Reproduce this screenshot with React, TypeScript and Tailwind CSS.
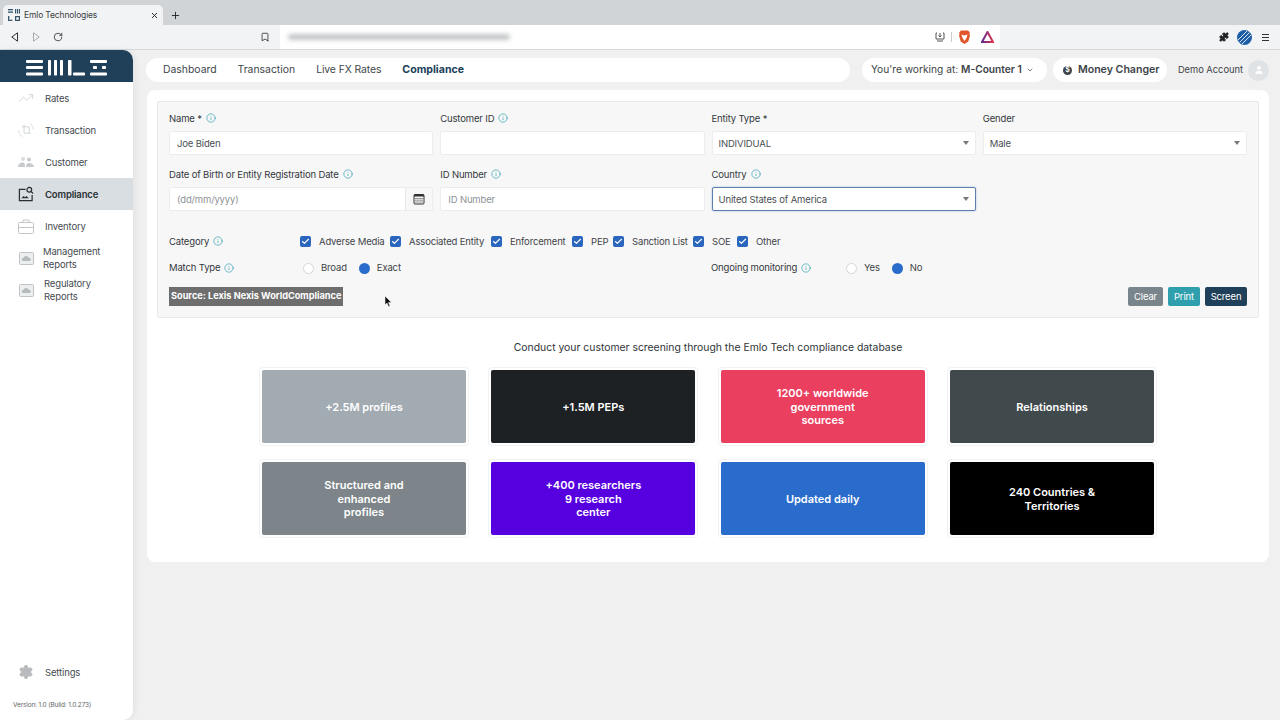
import React from 'react'
import { ChevronDown, Puzzle, RotateCw, Settings, TrendingUp, X, Plus, Bookmark, User, Info, Check } from 'lucide-react'

const tiles = [
  { text: ['+2.5M profiles'], bg: 'bg-[#a2abb1]' },
  { text: ['+1.5M PEPs'], bg: 'bg-[#1e2124]' },
  { text: ['1200+ worldwide', 'government', 'sources'], bg: 'bg-[#ea3f5f]' },
  { text: ['Relationships'], bg: 'bg-[#40494b]' },
  { text: ['Structured and', 'enhanced', 'profiles'], bg: 'bg-[#7d858a]' },
  { text: ['+400 researchers', '9 research', 'center'], bg: 'bg-[#5600e0]' },
  { text: ['Updated daily'], bg: 'bg-[#2a6ccb]' },
  { text: ['240 Countries &', 'Territories'], bg: 'bg-black' },
]

const categories = [
  { label: 'Adverse Media', width: 'w-[90px]' },
  { label: 'Associated Entity', width: 'w-[101px]' },
  { label: 'Enforcement', width: 'w-[81px]' },
  { label: 'PEP', width: 'w-[41px]' },
  { label: 'Sanction List', width: 'w-[80px]' },
  { label: 'SOE', width: 'w-[44px]' },
  { label: 'Other', width: 'w-[50px]' },
]

const InfoDot = () => <Info className="w-[10px] h-[10px] text-[#2b9db0] shrink-0" strokeWidth={1.6} />

const Logo = () => (
  <svg width="82" height="16" viewBox="0 0 82 16" fill="#fff" aria-hidden="true">
    <rect x="0" y="0" width="17" height="3" rx="1" />
    <rect x="0" y="6" width="17" height="3" rx="1" />
    <rect x="0" y="12.5" width="17" height="3" rx="1" />
    <rect x="22" y="0" width="3" height="15.5" rx=".8" />
    <rect x="28" y="0" width="3" height="15.5" rx=".8" />
    <rect x="34" y="0" width="3" height="15.5" rx=".8" />
    <rect x="42" y="0" width="3.500" height="15.5" rx=".8" />
    <rect x="47" y="12.5" width="12" height="3" rx=".8" />
    <rect x="64" y="0" width="17" height="3" rx="1" />
    <rect x="67" y="6" width="4" height="3" rx=".8" />
    <rect x="76" y="6" width="4" height="3" rx=".8" />
    <rect x="64" y="12.5" width="17" height="3" rx="1" />
  </svg>
)

const Favicon = () => (
  <svg width="12" height="12" viewBox="0 0 12 12" fill="#33546b" aria-hidden="true">
    <rect x="0" y="0" width="5" height="1.3" />
    <rect x="0" y="2.5" width="5" height="1.3" />
    <rect x="7" y="0" width="1.2" height="4.5" />
    <rect x="9" y="0" width="1.2" height="4.5" />
    <rect x="11" y="0" width="1" height="4.5" />
    <rect x="0" y="7" width="1.3" height="5" />
    <rect x="1.3" y="10.7" width="3" height="1.3" />
    <path d="M7 7h5v5H7zM8.2 8.2v2.6h2.6V8.2z" fillRule="evenodd" />
  </svg>
)

const Brave = () => (
  <svg width="13" height="14" viewBox="0 0 13 14" aria-hidden="true">
    <path d="M3 .5h7l2 2.2-.6 1.3.6 1.5-1.7 6L6.5 14 2.700 11.500 1 5.500 1.600 4 1 2.700z" fill="#e2552b" />
    <path d="M3.500 4.500 6.500 5.500 9.500 4.500 8.500 8 6.500 11 4.500 8z" fill="#fff" />
  </svg>
)

const Warn = () => (
  <svg width="13" height="12" viewBox="0 0 13 12" aria-hidden="true">
    <defs>
      <linearGradient id="warn" x1="0" x2="1" y1="0" y2="0">
        <stop offset="0" stopColor="#5d2a91" />
        <stop offset="1" stopColor="#e0344c" />
      </linearGradient>
    </defs>
    <path d="M6.500 1 12 11H1z" fill="none" stroke="url(#warn)" strokeWidth="2" />
  </svg>
)

const Globe = () => (
  <svg width="15" height="15" viewBox="0 0 15 15" aria-hidden="true">
    <circle cx="7.500" cy="7.500" r="7.500" fill="#1f5fa8" />
    <path d="M1 10 10 1M2.500 12.500 12.500 2.500M5 14 14 5" stroke="#d8e4ee" strokeWidth="1" />
  </svg>
)

const Calendar = () => (
  <svg width="12" height="12" viewBox="0 0 12 12" fill="none" aria-hidden="true">
    <rect x="1" y="1.500" width="10" height="9.500" rx="1" stroke="#333" />
    <rect x="1" y="1.500" width="10" height="2" fill="#333" />
    <path d="M2.500 5.500h7M2.500 7.200h7M2.500 9h7" stroke="#333" strokeDasharray="1 1" />
  </svg>
)

const ReportIcon = () => (
  <svg width="15" height="13" viewBox="0 0 15 13" aria-hidden="true">
    <rect x=".5" y=".5" width="14" height="12" rx="1" fill="#eceeef" stroke="#bfc3c6" />
    <path d="M4 9a1.500 1.500 0 0 1 .4-3 3 3 0 0 1 5.600 0 1.500 1.500 0 0 1 .8 3z" fill="#b5babd" />
  </svg>
)

const TransactionIcon = () => (
  <svg width="20" height="20" viewBox="0 0 20 20" fill="none" stroke="#c8cbce" strokeWidth="1" aria-hidden="true">
    <path d="M5 6h9v8M7.500 3.500V14H16" />
    <path d="M1 11a9 9 0 0 0 5 7.500M19 9a9 9 0 0 0-5-7.500" strokeDasharray="3 1" />
  </svg>
)

const CustomerIcon = () => (
  <svg width="16" height="12" viewBox="0 0 16 12" fill="#c8cbce" aria-hidden="true">
    <circle cx="5" cy="3" r="2" fill="#dadcde" />
    <circle cx="11" cy="3.500" r="2" />
    <path d="M0 11c0-3 2-4.500 4.500-4.500S7 8 7 11zM8 11c0-3 1-4 3-4s5 1 5 4z" />
  </svg>
)

const InventoryIcon = () => (
  <svg width="16" height="15" viewBox="0 0 16 15" fill="none" stroke="#c3c6c9" strokeWidth="1" aria-hidden="true">
    <rect x=".5" y="3.500" width="15" height="11" rx="1" />
    <path d="M.5 8.500h15M5 3.500V1h6v2.500" />
  </svg>
)

const ComplianceIcon = () => (
  <svg width="17" height="16" viewBox="0 0 17 16" fill="none" stroke="#2a2f33" strokeWidth="1.300" aria-hidden="true">
    <path d="M8 3H1.500v12h13.500V9" />
    <circle cx="12" cy="3.500" r="2.500" />
    <path d="M14 5.500 16 7.500" />
    <path d="M3.500 12.500 6 10l1.500 1.500L9 10l2.500 2.500z" fill="#2a2f33" stroke="none" />
  </svg>
)

const SideItem = ({ icon, lines, active, textGap = 'ml-[11px]' }: { icon: React.ReactNode; lines: string[]; active?: boolean; textGap?: string }) => (
  <div className={`flex items-center h-[32px] pl-[18px] ${active ? 'bg-[#d9dee2] font-semibold text-[#2a2f33]' : 'text-[#454b50]'}`}>
    <div className="w-[16px] flex justify-center shrink-0">{icon}</div>
    <div className={`${textGap} leading-[13px]`}>
      {lines.map((l) => (
        <div key={l}>{l}</div>
      ))}
    </div>
  </div>
)

const Field = ({ label, value, placeholder, select, focus, calendar }: { label: string; value?: string; placeholder?: string; select?: boolean; focus?: boolean; calendar?: boolean }) => (
  <div>
    <div className="flex items-center gap-[4px] h-[14px] mb-[6px] text-[#33383c]">
      <span className="pt-[2px]">{label}</span>
      {(!select || label === 'Country') && <InfoDot />}
    </div>
    <div className={`flex items-center h-[24px] bg-white rounded-[2px] border ${focus ? 'border-[#5b7fae] shadow-[0_0_2px_rgba(70,120,190,0.5)]' : 'border-[#ececec]'}`}>
      <span className={`flex-1 pt-[2px] ${select ? 'pl-[6px]' : 'pl-[7px]'} ${value ? 'text-[#4a4f53]' : 'text-[#8d9296]'}`}>{value ?? placeholder}</span>
      {select && <span className="mr-[6px] w-0 h-0 border-x-[3.5px] border-x-transparent border-t-[4px] border-t-[#777]" />}
      {calendar && (
        <span className="w-[27px] h-full bg-[#f7f7f7] border-l border-[#e8e8e8] flex items-center justify-center">
          <Calendar />
        </span>
      )}
    </div>
  </div>
)

const CheckItem = ({ label, width }: { label: string; width: string }) => (
  <div className={`flex items-center gap-[8px] whitespace-nowrap ${width}`}>
    <span className="w-[11px] h-[11px] rounded-[2px] bg-[#2a66bd] flex items-center justify-center shrink-0">
      <Check className="w-[9px] h-[9px] text-white" strokeWidth={3} />
    </span>
    <span className="pt-[2px] text-[#3f4448]">{label}</span>
  </div>
)

const RadioItem = ({ label, on }: { label: string; on?: boolean }) => (
  <div className="flex items-center gap-[7px]">
    <span className={`w-[11px] h-[11px] rounded-full ${on ? 'bg-[#2a6ccb]' : 'bg-white border border-[#d6d6d6]'}`} />
    <span className="text-[#3f4448]">{label}</span>
  </div>
)

export default function App() {
  return (
    <div className="w-[1280px] h-[720px] overflow-hidden relative bg-[#f0f0f0] text-[9.5px] tracking-[-0.15px] flex flex-col" style={{ fontFamily: 'Inter, "Noto Sans", sans-serif' }}>
      {/* browser tabs */}
      <div className="h-[25px] bg-[#d0d4d6] flex items-end pl-[3px] shrink-0">
        <div className="w-[160px] h-[20px] bg-[#f1f3f4] rounded-t-[5px] flex items-center pl-[5px] pr-[4px] text-[#3d4145] text-[8.5px]">
          <Favicon />
          <span className="ml-[4px] flex-1">Emlo Technologies</span>
          <X className="w-[9px] h-[9px] text-[#222]" strokeWidth={2.5} />
        </div>
        <Plus className="w-[11px] h-[11px] ml-[7px] mb-[4px] text-[#222]" strokeWidth={2} />
      </div>
      <div className="h-[25px] bg-[#f1f3f4] border-b border-[#d6d8da] flex items-center shrink-0">
        <svg className="ml-[11px]" width="7" height="10" viewBox="0 0 7 10" fill="none" stroke="#333" aria-hidden="true"><path d="M6.500.8v8.400L.8 5z" /></svg>
        <svg className="ml-[15px]" width="7" height="10" viewBox="0 0 7 10" fill="none" stroke="#aaa" aria-hidden="true"><path d="M.5.800v8.400L6.200 5z" /></svg>
        <RotateCw className="w-[10px] h-[10px] ml-[13px] text-[#333]" strokeWidth={2} />
        <Bookmark className="w-[10px] h-[10px] ml-[197px] text-[#333]" strokeWidth={2} />
        <div className="w-[720px] h-[24px] ml-[10px] bg-white flex items-center pl-[8px] pr-[6px]">
          <div className="w-[222px] h-[6px] bg-[#c4c6c8] blur-[2px] rounded-full" />
          <div className="flex-1" />
          <svg width="10" height="10" viewBox="0 0 10 10" fill="none" stroke="#555" aria-hidden="true"><path d="M2 1H1v6h8V1H8M5 1v4M3.500 3.500 5 5l1.500-1.500M2 9h6" /></svg>
          <div className="w-px h-[10px] bg-[#ccc] mx-[6px]" />
          <Brave />
          <div className="w-[10px]" />
          <Warn />
        </div>
        <div className="flex-1" />
        <Puzzle className="w-[10px] h-[10px] text-[#222] fill-[#222]" />
        <div className="ml-[8px]"><Globe /></div>
        <div className="ml-[10px] mr-[11px] w-[7px] flex flex-col gap-[2px]">
          <div className="h-px bg-[#333]" />
          <div className="h-px bg-[#333]" />
          <div className="h-px bg-[#333]" />
        </div>
      </div>

      <div className="flex-1 flex min-h-0">
        {/* sidebar */}
        <aside className="w-[133px] shrink-0 bg-white rounded-tr-[10px] rounded-br-[10px] shadow-[2px_0_6px_rgba(0,0,0,0.06)] flex flex-col">
          <div className="h-[32px] bg-[#20405a] rounded-tr-[10px] flex items-center pl-[26px] pt-[3px] shrink-0">
            <Logo />
          </div>
          <div>
            <SideItem icon={<TrendingUp className="w-[16px] h-[16px] text-[#c3c6c9]" strokeWidth={1} />} lines={['Rates']} />
            <SideItem icon={<TransactionIcon />} lines={['Transaction']} />
            <SideItem icon={<CustomerIcon />} lines={['Customer']} />
            <SideItem icon={<ComplianceIcon />} lines={['Compliance']} active />
            <SideItem icon={<InventoryIcon />} lines={['Inventory']} />
            <SideItem icon={<ReportIcon />} lines={['Management', 'Reports']} textGap="ml-[9px]" />
            <SideItem icon={<ReportIcon />} lines={['Regulatory', 'Reports']} textGap="ml-[10px]" />
          </div>
          <div className="flex-1" />
          <div className="flex items-center pl-[18px] text-[#454b50]">
            <Settings className="w-[16px] h-[16px] text-[#b9bcbf] fill-[#b9bcbf]" strokeWidth={1.5} />
            <span className="ml-[11px] pt-[2px]">Settings</span>
          </div>
          <div className="text-[6.5px] text-[#666] pl-[13px] mt-[21px] mb-[11px] leading-[8px]">Version: 1.0 (Build: 1.0.273)</div>
        </aside>

        {/* main */}
        <main className="flex-1 pl-[13px] pr-[11px] pt-[8px] min-w-0">
          <div className="flex items-center h-[24px] text-[#3d4347] tracking-normal">
            <nav className="w-[704px] h-[24px] bg-white rounded-full flex items-center pl-[17px] gap-[21px] text-[10.4px] text-[#40464a]">
              <span>Dashboard</span>
              <span>Transaction</span>
              <span className="tracking-[-0.1px]">Live FX Rates</span>
              <span className="font-bold text-[#20405a] text-[10.6px]">Compliance</span>
            </nav>
            <div className="ml-[12px] w-[185px] h-[24px] bg-white rounded-full flex items-center pl-[9px] text-[10.2px] whitespace-nowrap">
              You're working at:&nbsp;<b className="font-semibold">M-Counter 1</b>
              <ChevronDown className="w-[8px] h-[8px] ml-[4px]" />
            </div>
            <div className="ml-[6px] w-[114px] h-[24px] bg-white rounded-full flex items-center pl-[10px] text-[10.6px] font-semibold whitespace-nowrap">
              <span className="w-[9px] h-[9px] rounded-full bg-[#3d4347] text-white text-[7px] flex items-center justify-center mr-[6px]">$</span>
              Money Changer
            </div>
            <span className="ml-[11px] text-[9.3px] whitespace-nowrap">Demo Account</span>
            <span className="ml-[5px] w-[21px] h-[21px] rounded-full bg-[#dfe3e6] flex items-center justify-center">
              <User className="w-[10px] h-[10px] text-white fill-white" />
            </span>
          </div>

          <div className="mt-[8px] ml-px h-[472px] bg-white rounded-[8px] pt-[11px] px-[10px]">
            {/* filter form */}
            <div className="h-[217px] bg-[#f7f7f7] border border-[#e9e9e9] rounded-[2px] px-[11px] pt-[9px]">
              <div className="grid grid-cols-4 gap-x-[7px] gap-y-[12px]">
                <Field label="Name *" value="Joe Biden" />
                <Field label="Customer ID" />
                <Field label="Entity Type *" value="INDIVIDUAL" select />
                <Field label="Gender" value="Male" select />
                <Field label="Date of Birth or Entity Registration Date" placeholder="(dd/mm/yyyy)" calendar />
                <Field label="ID Number" placeholder="ID Number" />
                <Field label="Country" value="United States of America" select focus />
              </div>
              <div className="flex items-center mt-[23px] h-[14px]">
                <div className="w-[131px] flex items-center gap-[4px] text-[#33383c]"><span className="pt-[2px]">Category</span> <InfoDot /></div>
                {categories.map((c) => (
                  <CheckItem key={c.label} label={c.label} width={c.width} />
                ))}
              </div>
              <div className="flex items-center mt-[13px] h-[14px]">
                <div className="w-[134px] flex items-center gap-[4px] text-[#33383c]">Match Type <InfoDot /></div>
                <div className="w-[408px] flex gap-[12px] pt-px">
                  <RadioItem label="Broad" />
                  <RadioItem label="Exact" on />
                </div>
                <div className="w-[135px] flex items-center gap-[4px] text-[#33383c]">Ongoing monitoring <InfoDot /></div>
                <div className="flex gap-[12px] pt-px">
                  <RadioItem label="Yes" />
                  <RadioItem label="No" on />
                </div>
              </div>
              <div className="flex items-center justify-between mt-[11px] h-[20px]">
                <div className="w-[174px] h-[19px] bg-[#6e6e6e] text-white font-bold text-[9.2px] tracking-normal flex items-center pl-[2px] whitespace-nowrap">Source: Lexis Nexis WorldCompliance</div>
                <div className="flex gap-[5px] text-white">
                  <span className="w-[35px] h-[19px] pt-[2px] rounded-[2px] bg-[#79858a] flex items-center justify-center">Clear</span>
                  <span className="w-[32px] h-[19px] pt-[2px] rounded-[2px] bg-[#2f9fad] flex items-center justify-center">Print</span>
                  <span className="w-[42px] h-[19px] pt-[2px] rounded-[2px] bg-[#20405a] flex items-center justify-center">Screen</span>
                </div>
              </div>
            </div>

            <p className="text-center text-[10.4px] tracking-normal text-[#2f3438] mt-[23px] leading-[13px]">Conduct your customer screening through the Emlo Tech compliance database</p>

            <div className="grid grid-cols-4 gap-x-[19.5px] gap-y-[13px] w-[898px] ml-[102px] mt-[13px]">
              {tiles.map((t) => (
                <div key={t.text[0]} className="h-[79px] p-[2px] bg-white rounded-[4px] border border-[#f0f2f3]">
                  <div className={`h-full pt-[2px] rounded-[2px] ${t.bg} text-white font-semibold text-[11px] tracking-normal leading-[13.5px] flex flex-col items-center justify-center text-center`}>
                    {t.text.map((l) => (
                      <div key={l}>{l}</div>
                    ))}
                  </div>
                </div>
              ))}
            </div>
          </div>
        </main>
      </div>

      {/* mouse pointer */}
      <svg className="absolute left-[385px] top-[296px]" width="7" height="11" viewBox="0 0 7 11" aria-hidden="true">
        <path d="M0 0v9l2-2 1.500 3.500 1.500-.6L3.500 6.500H6.500z" fill="#111" stroke="#fff" strokeWidth=".5" />
      </svg>
    </div>
  )
}
